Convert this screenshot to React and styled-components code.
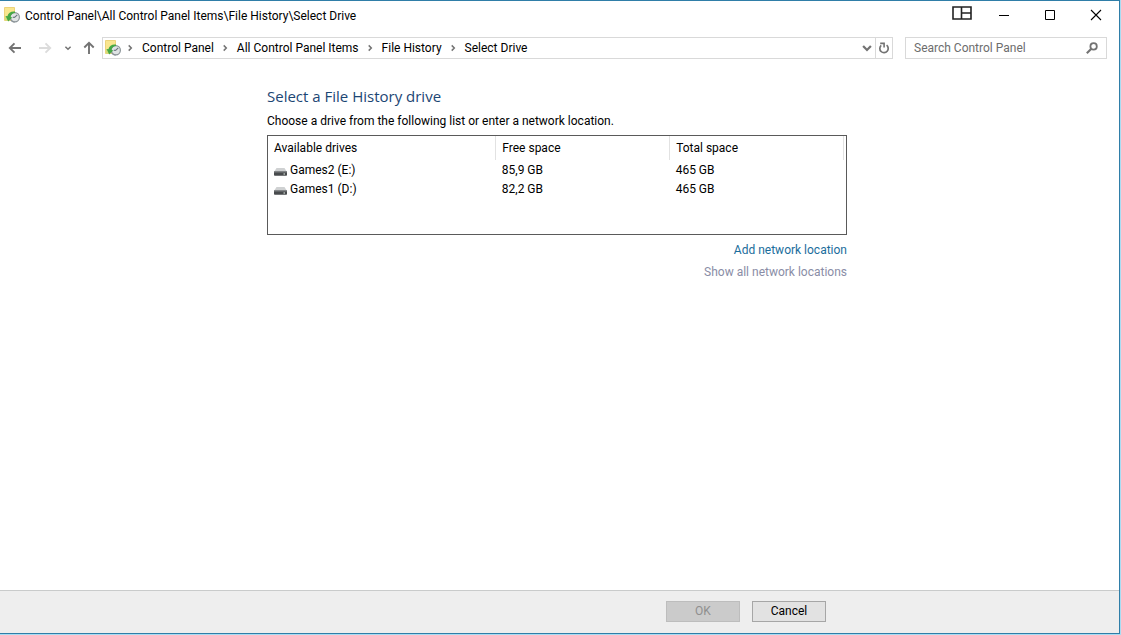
import React from 'react';
import styled, { createGlobalStyle } from 'styled-components';

const palette = {
  frame: '#2f7ea8',
  frameGlow: '#a9dcf2',
  text: '#000000',
  heading: '#1c4674',
  link: '#1a6d9c',
  disabledLink: '#8a8da6',
  line: '#d9d9d9',
  icon: '#737373',
};

const crumbs = ['Control Panel', 'All Control Panel Items', 'File History', 'Select Drive'];

const drives = [
  { name: 'Games2 (E:)', free: '85,9 GB', total: '465 GB' },
  { name: 'Games1 (D:)', free: '82,2 GB', total: '465 GB' },
];

const HistoryIcon = () => (
  <svg width="16" height="16" viewBox="0 0 16 16" aria-hidden="true">
    <path d="M0.5 0.5h10v13h-10z" fill="#f9e68f" stroke="#ecd37a" />
    <path d="M1 9h5v4.5H1z" fill="#d3dd7a" />
    <circle cx="10.8" cy="10.2" r="4.6" fill="#dfe3e4" stroke="#8b9498" strokeWidth="1.2" />
    <path d="M10.6 10.4L13.3 7.8M10.6 10.4L8.8 10.2" stroke="#66737a" strokeWidth="1.1" fill="none" />
    <path d="M11 4.6C7.2 4 4.2 6 3.4 9.2L1.6 9l2.6 5.4L8.4 10.4l-2-.4C6.900 7.600 8.400 6.100 11 6z" fill="#45a845" />
    <path d="M6.200 12.400c.9 1.700 2.500 2.700 4.600 2.700" stroke="#8b9498" fill="none" />
  </svg>
);

const DriveIcon = () => (
  <svg width="13" height="16" viewBox="0 0 13 16" aria-hidden="true">
    <path d="M2.500 6h8L13 10H0z" fill="#cfd1d2" />
    <path d="M0 9.500h13V13a.8.8 0 0 1-.8.8H.8A.8.8 0 0 1 0 13z" fill="#484b4d" />
    <path d="M0 9.500h13v1H0z" fill="#7b7f81" />
    <path d="M9.500 11.500H11v1H9.500z" fill="#e8f4ec" />
  </svg>
);

const ArrowIcon = ({ turn = 0 }) => (
  <svg width="14" height="14" viewBox="0 0 14 14" aria-hidden="true">
    <path
      d="M13 7H2M6.5 2.3L1.8 7l4.7 4.700"
      transform={`rotate(${turn} 7 7)`}
      fill="none"
      stroke="currentColor"
      strokeWidth="1.9"
    />
  </svg>
);

const ChevronIcon = ({ size = 8, turn = 0 }) => (
  <svg width={size} height={size} viewBox="0 0 8 8" aria-hidden="true">
    <path
      d="M2.700 1.400L5.300 4 2.700 6.600"
      transform={`rotate(${turn} 4 4)`}
      fill="none"
      stroke="currentColor"
      strokeWidth="1.5"
    />
  </svg>
);

const RefreshIcon = () => (
  <svg width="12" height="12" viewBox="0 0 12 12" aria-hidden="true">
    <path d="M8.600 3.200A4.200 4.200 0 1 1 3.200 3.400" fill="none" stroke="currentColor" strokeWidth="1.7" />
    <path d="M2.200 1.400h3.900v4" fill="none" stroke="currentColor" strokeWidth="1.6" />
  </svg>
);

const SearchIcon = () => (
  <svg width="12" height="12" viewBox="0 0 12 12" aria-hidden="true">
    <circle cx="7.600" cy="4.400" r="3.200" fill="none" stroke="currentColor" strokeWidth="1.8" />
    <path d="M5.300 6.700L0.800 11.200" stroke="currentColor" strokeWidth="2.100" />
  </svg>
);

const App = () => {
  return (
    <>
      <GlobalStyle />
      <Window>
        <TitleBar>
          <HistoryIcon />
          <Title>Control Panel\All Control Panel Items\File History\Select Drive</Title>
          <CaptionButton aria-label="Window layout" $raised>
            <svg width="20" height="14" viewBox="0 0 20 14">
              <path d="M1 1h18v12H1zM9.500 1v12M9.500 7H19" fill="none" stroke="#222" strokeWidth="1.600" />
            </svg>
          </CaptionButton>
          <CaptionButton aria-label="Minimize">
            <svg width="12" height="12" viewBox="0 0 12 12">
              <path d="M1 6.500h10" stroke="#000" />
            </svg>
          </CaptionButton>
          <CaptionButton aria-label="Maximize">
            <svg width="12" height="12" viewBox="0 0 12 12">
              <path d="M1.500 1.500h9v9h-9z" fill="none" stroke="#000" />
            </svg>
          </CaptionButton>
          <CaptionButton aria-label="Close">
            <svg width="12" height="12" viewBox="0 0 12 12">
              <path d="M1 1l10 10M11 1L1 11" stroke="#000" strokeWidth="1.100" />
            </svg>
          </CaptionButton>
        </TitleBar>

        <NavBar>
          <NavButtons>
            <NavButton aria-label="Back" $width={30}><ArrowIcon /></NavButton>
            <NavButton aria-label="Forward" $width={30} disabled><ArrowIcon turn={180} /></NavButton>
            <NavButton aria-label="Recent locations" $width={16}><ChevronIcon turn={90} /></NavButton>
            <NavButton aria-label="Up" $width={26}><ArrowIcon turn={90} /></NavButton>
          </NavButtons>
          <AddressBar>
            <HistoryIcon />
            <Crumbs>
              {crumbs.map((crumb) => (
                <Crumb key={crumb}>
                  <ChevronIcon />
                  <CrumbLink href="#">{crumb}</CrumbLink>
                </Crumb>
              ))}
            </Crumbs>
            <AddressButton aria-label="Previous locations"><ChevronIcon size={12} turn={90} /></AddressButton>
            <AddressButton aria-label="Refresh" $divided><RefreshIcon /></AddressButton>
          </AddressBar>
          <SearchBox>
            <SearchInput type="text" aria-label="Search Control Panel" placeholder="Search Control Panel" />
            <SearchIcon />
          </SearchBox>
        </NavBar>

        <Main>
          <Heading>Select a File History drive</Heading>
          <Intro>Choose a drive from the following list or enter a network location.</Intro>
          <DriveList>
            <DriveTable>
              <colgroup>
                <Column $share={228} />
                <Column $share={174} />
                <Column $share={174} />
              </colgroup>
              <thead>
                <tr>
                  <HeadCell>Available drives</HeadCell>
                  <HeadCell>Free space</HeadCell>
                  <HeadCell>Total space</HeadCell>
                </tr>
              </thead>
              <tbody>
                {drives.map((drive) => (
                  <tr key={drive.name}>
                    <Cell>
                      <DriveName>
                        <DriveIcon />
                        {drive.name}
                      </DriveName>
                    </Cell>
                    <Cell>{drive.free}</Cell>
                    <Cell>{drive.total}</Cell>
                  </tr>
                ))}
              </tbody>
            </DriveTable>
          </DriveList>
          <Links>
            <TextLink href="#">Add network location</TextLink>
            <TextLink aria-disabled="true" $disabled>Show all network locations</TextLink>
          </Links>
        </Main>

        <Footer>
          <FooterInner>
            <DialogButton disabled>OK</DialogButton>
            <DialogButton>Cancel</DialogButton>
          </FooterInner>
        </Footer>
      </Window>
    </>
  );
};

const GlobalStyle = createGlobalStyle`
  * {
    box-sizing: border-box;
  }
  body {
    margin: 0;
    background: ${palette.frameGlow};
    color: ${palette.text};
    font-family: Roboto, 'Liberation Sans', sans-serif;
    font-size: 12px;
    line-height: 16px;
  }
  button, input {
    font: inherit;
    color: inherit;
  }
  svg {
    display: block;
    flex-shrink: 0;
  }
`;

const Window = styled.div`
  display: flex;
  flex-direction: column;
  min-height: calc(100vh - 1px);
  margin: 0 1px 1px 0;
  background: #ffffff;
  border: 1px solid ${palette.frame};
  border-left: 0;
`;

const TitleBar = styled.header`
  display: flex;
  align-items: center;
  height: 28px;
  padding-left: 4px;
`;

const Title = styled.div`
  flex: 1;
  margin-left: 5px;
  padding-top: 2px;
  white-space: nowrap;
`;

const CaptionButton = styled.button`
  display: flex;
  align-items: center;
  justify-content: center;
  width: ${(props) => (props.$raised ? '38px' : '46px')};
  height: 28px;
  padding: ${(props) => (props.$raised ? '0 0 4px' : '0')};
  border: 0;
  background: none;
`;

const NavBar = styled.nav`
  display: flex;
  align-items: center;
  margin-top: 8px;
  padding-right: 12px;
`;

const NavButtons = styled.div`
  display: flex;
  align-items: center;
  width: 102px;
`;

const NavButton = styled.button`
  display: flex;
  align-items: center;
  justify-content: center;
  width: ${(props) => props.$width}px;
  height: 22px;
  padding: 0;
  border: 0;
  background: none;
  color: ${palette.icon};
  &:disabled {
    color: #dcdcdc;
  }
`;

const AddressBar = styled.div`
  display: flex;
  align-items: center;
  flex: 1;
  height: 22px;
  padding-left: 2px;
  border: 1px solid ${palette.line};
`;

const Crumbs = styled.ol`
  display: flex;
  flex: 1;
  margin: 0;
  padding: 0 0 0 5px;
  list-style: none;
`;

const Crumb = styled.li`
  display: flex;
  align-items: center;
  margin-right: 7px;
  color: ${palette.icon};
`;

const CrumbLink = styled.a`
  margin-left: 8px;
  color: ${palette.text};
  text-decoration: none;
  white-space: nowrap;
`;

const AddressButton = styled.button`
  display: flex;
  align-items: center;
  justify-content: center;
  width: 17px;
  height: 20px;
  padding: 0;
  border: 0;
  border-left: ${(props) => (props.$divided ? `1px solid ${palette.line}` : '0')};
  background: none;
  color: ${palette.icon};
`;

const SearchBox = styled.div`
  display: flex;
  align-items: center;
  width: 202px;
  height: 22px;
  margin-left: 12px;
  padding: 0 8px;
  border: 1px solid ${palette.line};
  color: ${palette.icon};
`;

const SearchInput = styled.input`
  flex: 1;
  min-width: 0;
  height: 20px;
  padding: 0;
  border: 0;
  outline: 0;
  background: none;
  &::placeholder {
    color: #6d6d6d;
    opacity: 1;
  }
`;

const Main = styled.main`
  flex: 1;
  width: 100%;
  max-width: 585px;
  margin: 0 auto;
  padding: 27px 5px 0 0;
`;

const Heading = styled.h1`
  margin: 0 0 7px;
  color: ${palette.heading};
  font-family: 'Open Sans', sans-serif;
  font-size: 15px;
  font-weight: 400;
  line-height: 20px;
`;

const Intro = styled.p`
  margin: 0 0 6px;
`;

const DriveList = styled.div`
  height: 100px;
  padding-right: 2px;
  border: 1px solid #5a5a5a;
`;

const DriveTable = styled.table`
  width: 100%;
  table-layout: fixed;
  border-collapse: collapse;
`;

const Column = styled.col`
  width: ${(props) => (props.$share / 576) * 100}%;
`;

const HeadCell = styled.th`
  height: 24px;
  padding: 0 6px;
  border-right: 1px solid #e2e2e2;
  font-weight: 400;
  text-align: left;
`;

const Cell = styled.td`
  height: 19px;
  padding: 0 6px;
`;

const DriveName = styled.div`
  display: flex;
  align-items: center;
  gap: 3px;
`;

const Links = styled.div`
  display: flex;
  flex-direction: column;
  align-items: flex-end;
  gap: 6px;
  margin-top: 7px;
`;

const TextLink = styled.a`
  color: ${(props) => (props.$disabled ? palette.disabledLink : palette.link)};
  text-decoration: none;
`;

const Footer = styled.footer`
  padding: 10px 0 11px;
  border-top: 1px solid #c9cbcb;
  background: #eeeeee;
`;

const FooterInner = styled.div`
  display: flex;
  justify-content: flex-end;
  gap: 12px;
  max-width: 585px;
  margin: 0 auto;
  padding-right: 26px;
`;

const DialogButton = styled.button`
  width: 74px;
  height: 21px;
  padding: 0;
  border: 1px solid #a6a6a6;
  background: #e2e2e2;
  line-height: 19px;
  &:disabled {
    border-color: #bdbdbd;
    background: #cbcbcb;
    color: #8f8f8f;
  }
`;

export default App;
